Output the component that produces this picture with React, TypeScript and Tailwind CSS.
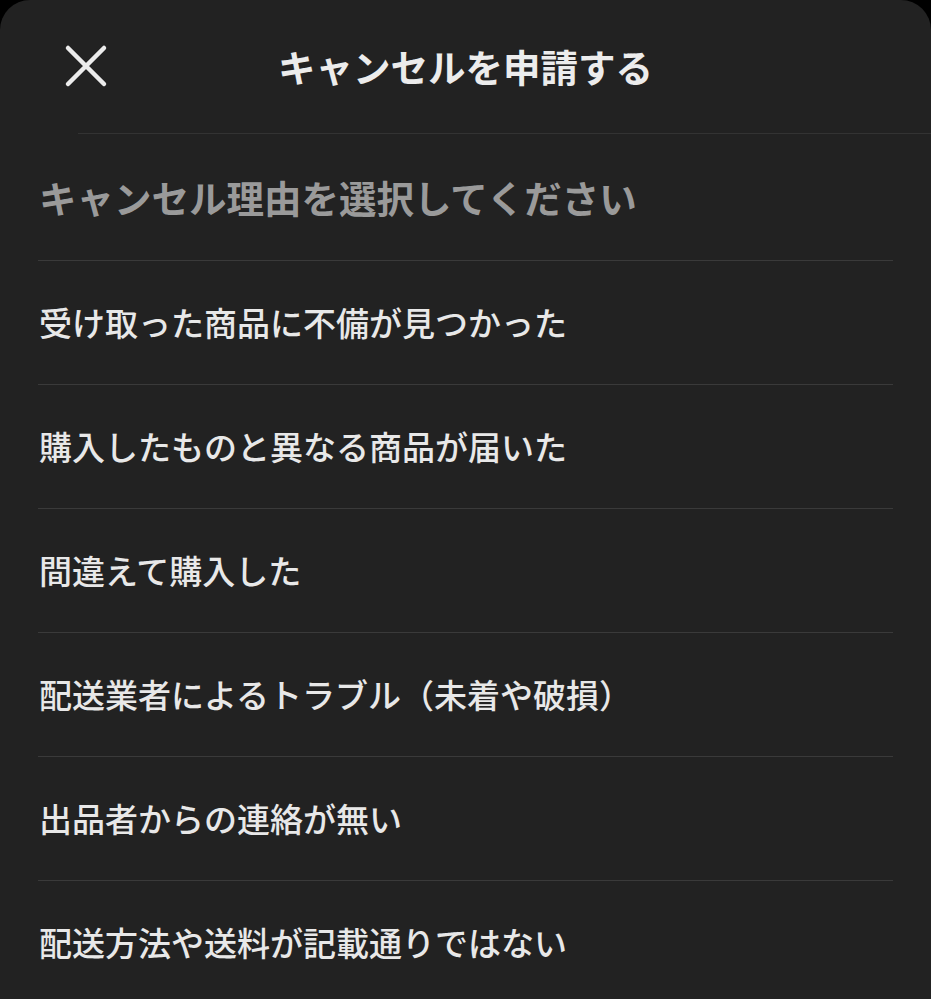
const reasons = [
  "受け取った商品に不備が見つかった",
  "購入したものと異なる商品が届いた",
  "間違えて購入した",
  "配送業者によるトラブル（未着や破損）",
  "出品者からの連絡が無い",
  "配送方法や送料が記載通りではない",
]

export default function App() {
  return (
    <div className="h-[999px] w-full overflow-hidden bg-black font-['Noto_Sans_CJK_JP',sans-serif]">
      <div className="h-full rounded-t-[30px] bg-[#222222]">
        {/* header */}
        <div className="relative flex h-[133px] items-center justify-center">
          <button className="absolute left-[62px] top-[42px] flex h-[48px] w-[48px] items-center justify-center">
            <svg width="46" height="46" viewBox="0 0 46 46" fill="none">
              <path d="M5 5L41 41M41 5L5 41" stroke="#ececec" strokeWidth="4.5" strokeLinecap="round" />
            </svg>
          </button>
          <h1 className="mt-[-2px] text-[37.5px] font-bold leading-none text-[#ececec]">キャンセルを申請する</h1>
        </div>
        <div className="ml-[78px] border-b border-[#333333]" />

        <div className="flex h-[126px] items-center px-[39px]">
          <h2 className="text-[37.5px] font-bold leading-none text-[#9a9a9a]">キャンセル理由を選択してください</h2>
        </div>

        <ul className="mx-[38px]">
          {reasons.map((r) => (
            <li key={r} className="flex h-[124px] items-center border-t border-[#3a3a3a] pl-[1px]">
              <span className="text-[33px] font-medium leading-none text-[#e8e8e8]">{r}</span>
            </li>
          ))}
        </ul>
      </div>
    </div>
  )
}
